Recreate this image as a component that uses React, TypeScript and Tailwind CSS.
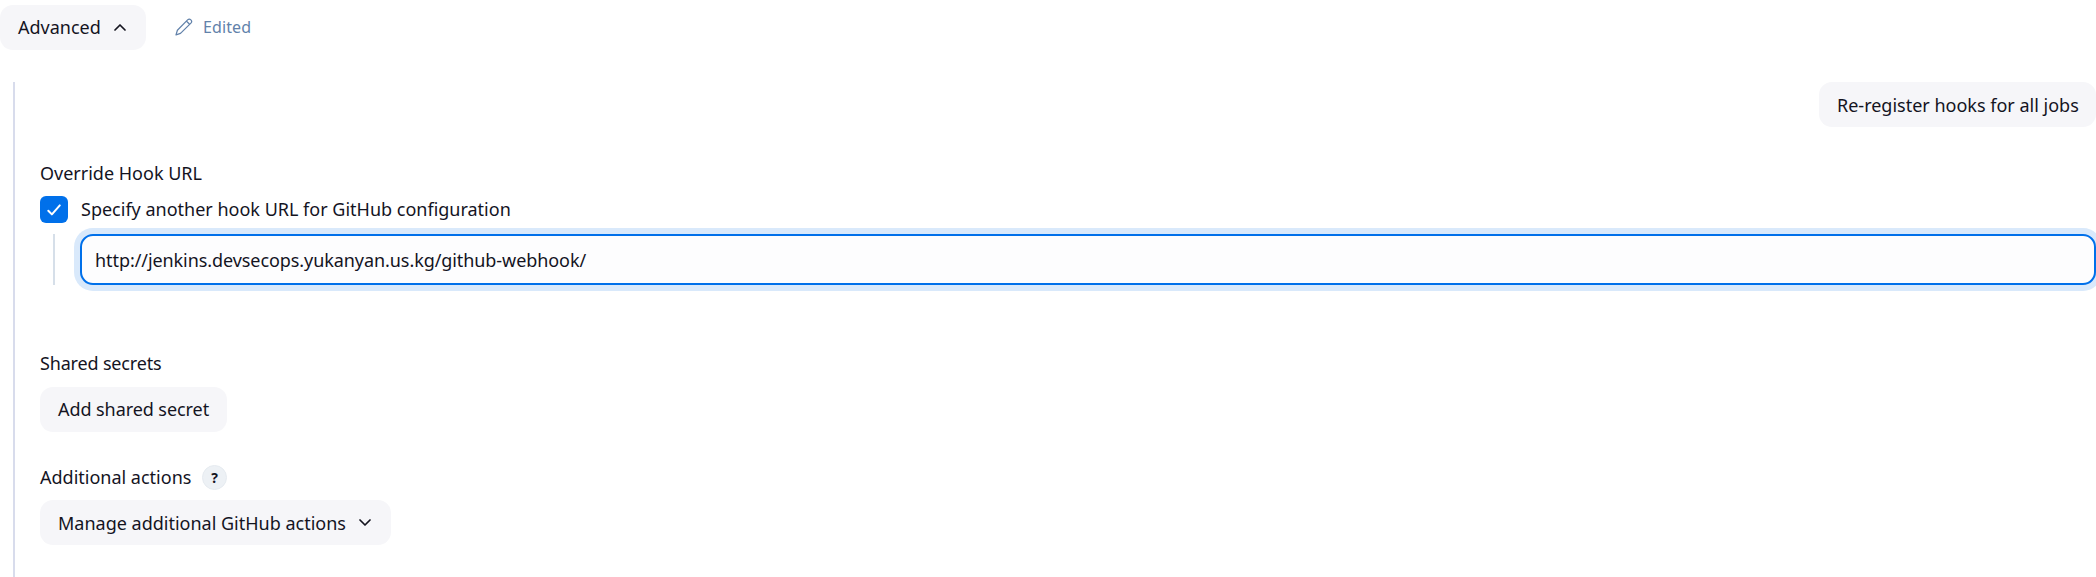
import type { ReactNode } from "react";

function Button({ className = "", children }: { className?: string; children: ReactNode }) {
  return (
    <button
      type="button"
      className={`flex h-[45px] shrink-0 items-center whitespace-nowrap rounded-[13px] bg-[#f6f6f9] pl-[18px] ${className}`}
    >
      {children}
    </button>
  );
}

function Chevron({ up = false }: { up?: boolean }) {
  return (
    <svg width="12" height="9" viewBox="0 0 12 9" fill="none" stroke="#14141f" strokeWidth="1.7" strokeLinecap="round" strokeLinejoin="round" className="shrink-0">
      <path d={up ? "M1 7 6 2l5 5" : "M1 2l5 5 5-5"} />
    </svg>
  );
}

function Pencil() {
  return (
    <svg width="18" height="18" viewBox="0 0 18 18" fill="none" stroke="#6282aa" strokeLinecap="round" strokeLinejoin="round" strokeWidth="1.25" className="shrink-0">
      <path d="M12.6 1.9 2.4 12.3 1 16.9l4.5-1.5L15.9 5.1C18 2.9 14.8-.3 12.6 1.9zM11.6 3.2l3 3" />
    </svg>
  );
}

export default function App() {
  return (
    <div className="flex h-[577px] w-full flex-col overflow-hidden bg-white pt-[5px] font-['Noto_Sans','Open_Sans',sans-serif] text-[18px] leading-[24px] text-[#14141f]">
      <div className="flex h-[45px] shrink-0 items-center">
        <Button className="w-[146px] pb-px">
          <span className="w-[96px] text-left">Advanced</span>
          <Chevron up />
        </Button>
        <div className="ml-[29px] flex items-center pb-px text-[#6282aa]">
          <Pencil />
          <span className="ml-[10px] text-[16px] tracking-[0.1px]">Edited</span>
        </div>
      </div>

      <div className="ml-[13px] mt-[32px] flex grow flex-col border-l-2 border-[#d8dcec] pl-[25px]">
        <div className="flex justify-end">
          <Button className="w-[277px]">
            <span>Re-register hooks for all jobs</span>
          </Button>
        </div>

        <div className="mt-[34px] h-6"><span>Override Hook URL</span></div>
        <label className="mt-[11px] flex h-[27px] items-center">
          <span className="flex h-[27px] w-7 items-center justify-center rounded-[6px] bg-[#0070ea]">
            <svg width="16" height="14" viewBox="0 0 16 14" fill="none" stroke="white" strokeWidth="2" strokeLinecap="round" strokeLinejoin="round">
              <path d="m2.3 7.7 3.6 3.7 7.9-9" />
            </svg>
          </span>
          <span className="ml-[13px] pb-px">Specify another hook URL for GitHub configuration</span>
        </label>
        <div className="ml-[13px] mt-[11px] flex h-[51px] border-l-2 border-[#d6dfe9] pl-[25px]">
          <div className="flex grow items-center rounded-[13px] border-2 border-[#0070ea] bg-[#fdfdfe] pl-[13px] shadow-[0_0_0_6px_#d9e9fb]">
            <span className="tracking-[-0.075px]">http://jenkins.devsecops.yukanyan.us.kg/github-webhook/</span>
          </div>
        </div>

        <div className="mt-[66px] h-6"><span className="tracking-[-0.17px]">Shared secrets</span></div>
        <div className="mt-[12px] flex">
          <Button className="w-[187px] pb-px"><span className="tracking-[-0.07px]">Add shared secret</span></Button>
        </div>

        <div className="mt-[33px] flex h-[25px] items-center">
          <span className="w-[162px] pb-px">Additional actions</span>
          <span className="flex size-[25px] items-center justify-center rounded-full border border-[#e6ebf0] bg-[#edf1f5] text-[14px] font-bold">?</span>
        </div>
        <div className="mt-[10px] flex">
          <Button className="w-[351px]">
            <span className="w-[301px] text-left">Manage additional GitHub actions</span>
            <Chevron />
          </Button>
        </div>
      </div>
    </div>
  );
}
